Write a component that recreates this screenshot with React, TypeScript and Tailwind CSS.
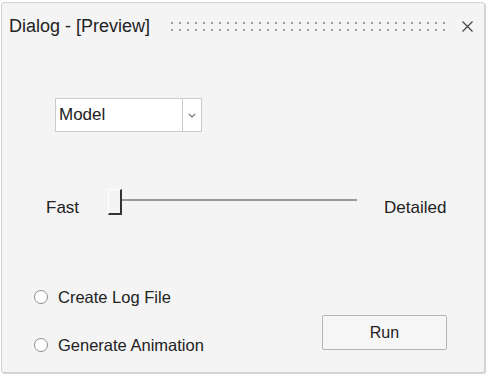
import React from "react";

const font = { fontFamily: '"Liberation Sans", Arial, sans-serif' };

function Dots() {
  const cols = Array.from({ length: 35 }, (_, i) => i);
  return (
    <svg width="282" height="10" viewBox="0 0 282 10" className="block">
      {cols.map((i) => (
        <g key={i}>
          <rect x={i * 8} y={0} width={2} height={2} fill="#9c9c9c" />
          <rect x={i * 8} y={7} width={2} height={2} fill="#9c9c9c" />
        </g>
      ))}
    </svg>
  );
}

function Radio({ label }: { label: string }) {
  return (
    <div className="flex items-center h-[20px]">
      <div className="w-[14px] h-[14px] rounded-full border border-[#8f8f8f] bg-white" />
      <span className="ml-[10px] text-[16.5px] leading-[20px] text-[#222]">{label}</span>
    </div>
  );
}

export default function App() {
  return (
    <div className="w-[487px] h-[375px] bg-white pt-[2px] pl-[1px]" style={font}>
      <div className="w-[484px] h-[371px] bg-[#f4f4f4] border border-[#d2d2d2] rounded-[3px] shadow-[1px_1px_1px_rgba(0,0,0,0.18)] flex flex-col">
        {/* Title bar */}
        <div className="h-[46px] flex items-center pl-[7px] pr-[11px]">
          <span className="text-[18px] leading-[22px] text-[#222] whitespace-nowrap">Dialog - [Preview]</span>
          <div className="ml-[21px] mt-[1px]">
            <Dots />
          </div>
          <div className="flex-1" />
          <svg width="11" height="11" viewBox="0 0 11 11" className="block">
            <path d="M0.5 0.5 L10.5 10.5 M10.5 0.5 L0.5 10.5" stroke="#444" strokeWidth="1.2" fill="none" />
          </svg>
        </div>

        {/* Dropdown */}
        <div className="mt-[49px] ml-[53px] flex w-[147px] h-[34px] bg-white border border-[#cccccc]">
          <div className="flex-1 flex items-center pl-[3px] text-[17px] text-[#222]">Model</div>
          <div className="w-[19px] border-l border-[#cccccc] flex items-center justify-center">
            <svg width="8" height="5" viewBox="0 0 8 5" className="block">
              <path d="M1 1 L4 4 L7 1" stroke="#777" strokeWidth="1.2" fill="none" />
            </svg>
          </div>
        </div>

        {/* Slider */}
        <div className="mt-[57px] flex items-start h-[26px]">
          <span className="ml-[44px] mt-[9px] text-[17px] leading-[20px] text-[#222]">Fast</span>
          <div className="ml-[29px] w-[14px] h-[26px] border-l border-t border-white border-r-2 border-b-2 border-r-[#333] border-b-[#333] bg-[#f4f4f4]" />
          <div className="mt-[10px] w-[235px] h-[2px] bg-[#9a9a9a]" />
          <span className="ml-[27px] mt-[9px] text-[17px] leading-[20px] text-[#222]">Detailed</span>
        </div>

        {/* Bottom */}
        <div className="mt-[72px] flex justify-between">
          <div className="ml-[32px] flex flex-col gap-[28px]">
            <Radio label="Create Log File" />
            <Radio label="Generate Animation" />
          </div>
          <button className="mt-[28px] mr-[37px] w-[125px] h-[35px] rounded-[2px] border border-[#b5b5b5] bg-[#f6f6f6] text-[16px] text-[#222]">
            Run
          </button>
        </div>
      </div>
    </div>
  );
}
